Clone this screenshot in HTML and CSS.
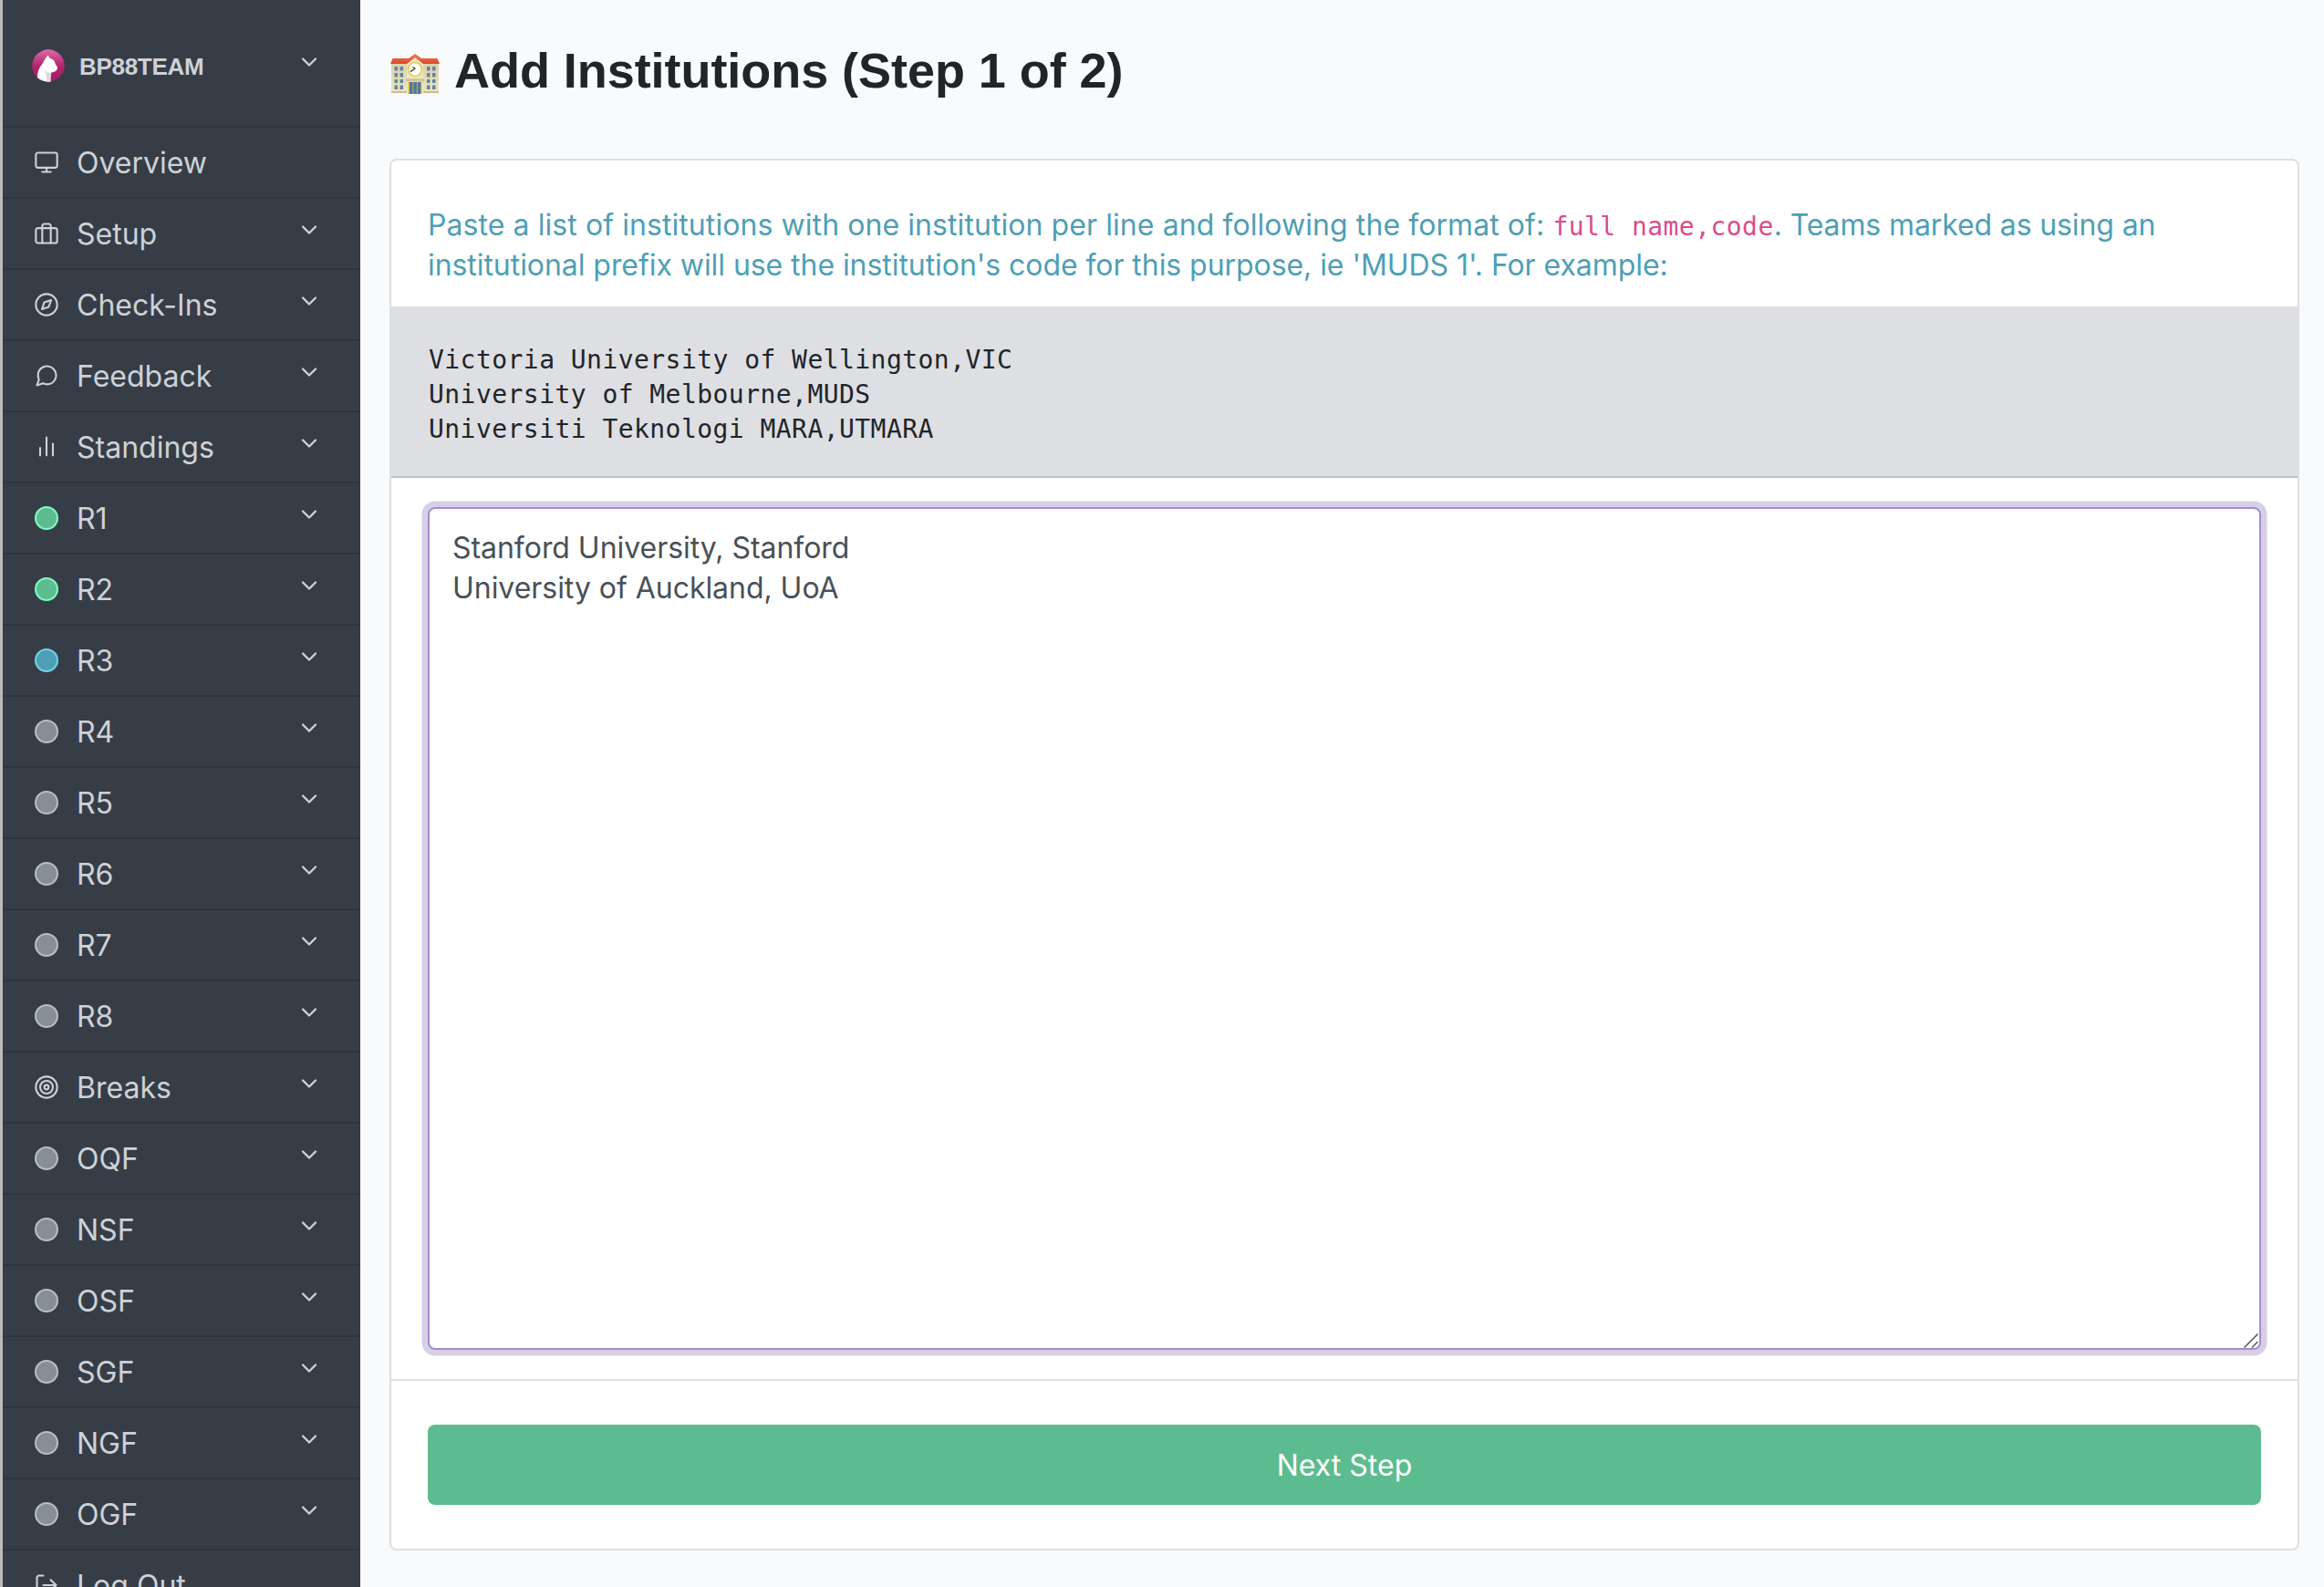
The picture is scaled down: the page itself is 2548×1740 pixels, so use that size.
FILE: index.html
```html
<!DOCTYPE html>
<html lang="en">
<head>
<meta charset="utf-8">
<title>Add Institutions</title>
<link rel="stylesheet" href="styles.css">
</head>
<body>
<svg class="defs" width="0" height="0">
  <symbol id="chevron" viewBox="0 0 24 24"><polyline points="6 9 12 15 18 9"/></symbol>
</svg>
<div class="app">
  <nav class="sidebar">
    <a class="brand">
      <svg class="logo" viewBox="0 0 36 36">
        <defs>
          <linearGradient id="pink" x1="0" y1="0" x2="0" y2="1"><stop offset="0" stop-color="#de6ba5"/><stop offset=".5" stop-color="#b4256f"/><stop offset="1" stop-color="#a01d68"/></linearGradient>
          <clipPath id="disc"><circle cx="18" cy="18" r="17.7"/></clipPath>
        </defs>
        <g clip-path="url(#disc)">
          <rect width="36" height="36" fill="url(#pink)"/>
          <path fill="#fff" d="M17.6 6.5c1 1 1.600 2.400 2.100 3.600 2.500.6 4.300 1.500 5.300 3.900.4 1.800 1 2.800 2.300 4.600.8 1.200.7 2.600.2 3.600-1 2.200-3.300 2.800-6 3.200-1 1.700-1 6.500-.8 10.600H6C5.500 30 6 23.500 10 18c3-3.500 3-6.500 7.600-11.500z"/>
          <path fill="#dcdadd" d="M14 23.500c2.500 2 4.600 2.400 7.300 2-1 2-1 6-.8 10.500h-4.200c-.1-4.500-.8-8.500-2.300-12.500z"/>
        </g>
      </svg>
      <span class="brand-name">BP88TEAM</span>
      <svg class="icon chevron"><use href="#chevron"/></svg>
    </a>
    <a class="item"><svg class="icon" viewBox="0 0 24 24"><rect x="2" y="3" width="20" height="14" rx="2"/><path d="M8 21h8M12 17v4"/></svg><span class="label">Overview</span></a>
    <a class="item"><svg class="icon" viewBox="0 0 24 24"><rect x="2" y="7" width="20" height="14" rx="2"/><path d="M16 21V5a2 2 0 0 0-2-2h-4a2 2 0 0 0-2 2v16"/></svg><span class="label">Setup</span><svg class="icon chevron"><use href="#chevron"/></svg></a>
    <a class="item"><svg class="icon" viewBox="0 0 24 24"><circle cx="12" cy="12" r="10"/><path d="M16.240 7.760l-2.120 6.360-6.360 2.120 2.120-6.360z"/></svg><span class="label">Check-Ins</span><svg class="icon chevron"><use href="#chevron"/></svg></a>
    <a class="item"><svg class="icon" viewBox="0 0 24 24"><path d="M21 11.500a8.380 8.380 0 0 1-.9 3.800 8.500 8.500 0 0 1-7.600 4.700 8.380 8.380 0 0 1-3.800-.9L3 21l1.900-5.700a8.380 8.380 0 0 1-.9-3.800 8.500 8.500 0 0 1 4.700-7.600 8.380 8.380 0 0 1 3.800-.9h.5a8.480 8.480 0 0 1 8 8v.5z"/></svg><span class="label">Feedback</span><svg class="icon chevron"><use href="#chevron"/></svg></a>
    <a class="item"><svg class="icon" viewBox="0 0 24 24"><path d="M18 20V9M12 20V3M6 20v-7"/></svg><span class="label">Standings</span><svg class="icon chevron"><use href="#chevron"/></svg></a>
    <a class="item"><i class="dot done"></i><span class="label">R1</span><svg class="icon chevron"><use href="#chevron"/></svg></a>
    <a class="item"><i class="dot done"></i><span class="label">R2</span><svg class="icon chevron"><use href="#chevron"/></svg></a>
    <a class="item"><i class="dot current"></i><span class="label">R3</span><svg class="icon chevron"><use href="#chevron"/></svg></a>
    <a class="item"><i class="dot"></i><span class="label">R4</span><svg class="icon chevron"><use href="#chevron"/></svg></a>
    <a class="item"><i class="dot"></i><span class="label">R5</span><svg class="icon chevron"><use href="#chevron"/></svg></a>
    <a class="item"><i class="dot"></i><span class="label">R6</span><svg class="icon chevron"><use href="#chevron"/></svg></a>
    <a class="item"><i class="dot"></i><span class="label">R7</span><svg class="icon chevron"><use href="#chevron"/></svg></a>
    <a class="item"><i class="dot"></i><span class="label">R8</span><svg class="icon chevron"><use href="#chevron"/></svg></a>
    <a class="item"><svg class="icon" viewBox="0 0 24 24"><circle cx="12" cy="12" r="10"/><circle cx="12" cy="12" r="6"/><circle cx="12" cy="12" r="2"/></svg><span class="label">Breaks</span><svg class="icon chevron"><use href="#chevron"/></svg></a>
    <a class="item"><i class="dot"></i><span class="label">OQF</span><svg class="icon chevron"><use href="#chevron"/></svg></a>
    <a class="item"><i class="dot"></i><span class="label">NSF</span><svg class="icon chevron"><use href="#chevron"/></svg></a>
    <a class="item"><i class="dot"></i><span class="label">OSF</span><svg class="icon chevron"><use href="#chevron"/></svg></a>
    <a class="item"><i class="dot"></i><span class="label">SGF</span><svg class="icon chevron"><use href="#chevron"/></svg></a>
    <a class="item"><i class="dot"></i><span class="label">NGF</span><svg class="icon chevron"><use href="#chevron"/></svg></a>
    <a class="item"><i class="dot"></i><span class="label">OGF</span><svg class="icon chevron"><use href="#chevron"/></svg></a>
    <a class="item"><svg class="icon" viewBox="0 0 24 24"><path d="M9 21H5a2 2 0 0 1-2-2V5a2 2 0 0 1 2-2h4M16 17l5-5-5-5M21 12H9"/></svg><span class="label">Log Out</span></a>
  </nav>
  <main class="main">
    <h1 class="title">
      <svg class="school" viewBox="0 0 54 44">
        <defs>
          <linearGradient id="wall" x1="0" y1="0" x2="0" y2="1"><stop offset="0" stop-color="#d9d0ae"/><stop offset="1" stop-color="#efe5bf"/></linearGradient>
          <linearGradient id="roof" x1="0" y1="0" x2="0" y2="1"><stop offset="0" stop-color="#f47a50"/><stop offset="1" stop-color="#d9492a"/></linearGradient>
        </defs>
        <rect x="1" y="10" width="52" height="32.500" fill="url(#wall)"/>
        <path fill="#c9bd97" d="M1 41h52v2H1z"/>
        <path fill="#f0e7c6" d="M18 43V10l9-8 9 8v33z"/>
        <path fill="url(#roof)" d="M2.500 5H20l7-5 7 5h17.500L54 11H36l-9-7-9 7H0z"/>
        <g fill="#5d86a3">
          <path d="M4.500 14h3.500v4.500H4.500zM10.500 14H14v4.500h-3.500zM4.500 21h3.500v4.500H4.500zM10.500 21H14v4.500h-3.500zM4.500 28h3.500v4H4.500zM10.500 28H14v4h-3.500zM4.500 34.500h3.500V39H4.500zM10.500 34.500H14V39h-3.500z"/>
          <path d="M40 14h3.500v4.500H40zM46 14h3.500v4.500H46zM40 21h3.500v4.500H40zM46 21h3.500v4.500H46zM40 28h3.500v4H40zM46 28h3.500v4H46zM40 34.500h3.500V39H40zM46 34.500h3.500V39H46z"/>
        </g>
        <path fill="#d0c69f" d="M17 27h20v3.500H17z"/>
        <path fill="#e0bd45" d="M19.500 31h15v13h-15z"/>
        <path fill="#4f7a9b" d="M21 31h3.500v13H21zM25.300 31h3.600v13h-3.600zM29.800 31h3.500v13h-3.500z"/>
        <circle cx="27" cy="17" r="7.500" fill="#fff" stroke="#e3c93f" stroke-width="1.600"/>
        <path d="M21.800 19.600l5.600-3.600M27.500 16l-3.300-1.500" fill="none" stroke="#444" stroke-width="1.300"/>
      </svg>
      <span class="title-text">Add Institutions (Step 1 of 2)</span>
    </h1>
    <form class="card">
      <p class="help"><span class="help-lead">Paste a list of institutions with one institution per line and following the format of: </span><code class="code">full name,code</code><span class="help-tail">. Teams marked as using an</span><br>institutional prefix will use the institution's code for this purpose, ie 'MUDS 1'. For example:</p>
      <pre class="example">Victoria University of Wellington,VIC
University of Melbourne,MUDS
Universiti Teknologi MARA,UTMARA</pre>
      <div class="field">
        <textarea class="input" spellcheck="false">Stanford University, Stanford
University of Auckland, UoA</textarea>
        <svg class="grip" viewBox="0 0 16 16"><path d="M.5 15.500l15-15M9 15.500L15.500 9"/></svg>
      </div>
      <div class="footer"><button class="submit" type="button">Next Step</button></div>
    </form>
  </main>
</div>
</body>
</html>
```
FILE: styles.css
```css
* { box-sizing: border-box; }
body { margin: 0; background: #f9fafc; font-family: Inter, sans-serif; font-size: 32px; }
.defs { display: block; }
.app { display: flex; height: 1740px; overflow: hidden; }

.sidebar { width: 395px; flex: none; background: #373d47; border-left: 3px solid #bbb; color: #cdd2d7; overflow: hidden; }
.brand, .item { display: flex; align-items: center; border-bottom: 2px solid #2f353f; padding: 0 42px 0 34px; }
.brand { height: 140px; padding-left: 32px; padding-top: 6px; }
.item { height: 78px; }
.logo { width: 36px; height: 36px; margin-right: 16px; }
.brand-name { padding-top: 2px; font: bold 26px "Liberation Sans", Arial, sans-serif; letter-spacing: -0.3px; flex: 1; }
.label { flex: 1; margin-left: 19px; padding-top: 2px; font-weight: 400; line-height: 44px; letter-spacing: 0; }
.icon { width: 28px; height: 28px; flex: none; fill: none; stroke: #cdd2d7; stroke-width: 1.800; stroke-linecap: round; stroke-linejoin: round; }
.chevron { transform: translateY(-4px); stroke-width: 2; }
.dot { width: 26px; height: 26px; margin: 0 1px; border-radius: 50%; background: #868e96; border: 2px solid #b9bec4; }
.done { background: #5dbc8f; border-color: #7dffc4; }
.current { background: #4e9fb5; border-color: #71d2ea; }

.main { flex: 1; padding: 0 27px 0 32px; }
.title { display: flex; align-items: center; height: 174px; margin: 0; padding-bottom: 16px; font: bold 54px "Liberation Sans", Arial, sans-serif; letter-spacing: -0.050px; color: #212529; }
.title-text { padding-bottom: 5px; }
.school { width: 54px; height: 44px; margin: 4px 16px 0 1px; }

.card { height: 1526px; border: 2px solid #dedfe1; border-radius: 8px; background: #fff; overflow: hidden; }
.help { height: 160px; margin: 0; padding: 49px 40px 0; line-height: 44px; letter-spacing: -0.060px; color: #4e9fb5; white-space: nowrap; }
.help-lead { letter-spacing: 0.075px; }
.help-tail { letter-spacing: -0.120px; }
.code, .example { font-family: "DejaVu Sans Mono", monospace; font-size: 28px; letter-spacing: 0.450px; }
.code { color: #d94d8c; line-height: 1; }
.example { height: 188px; margin: 0; padding: 40px 40px 0 41px; line-height: 38px; background: #dedfe3; border-bottom: 2px solid #bfc0c5; color: #212529; }
.field { position: relative; height: 990px; padding: 32px 40px; border-bottom: 2px solid #dedfe1; }
.input { display: block; width: 100%; height: 924px; padding: 21px 25px; border: 2px solid #a38ccf; border-radius: 8px; outline: 0; box-shadow: 0 0 0 6.500px #d7cfe6; resize: none; font: 32px/44px Inter, sans-serif; letter-spacing: -0.040px; color: #495057; }
.grip { position: absolute; right: 43px; bottom: 34px; width: 16px; height: 16px; fill: none; stroke: #555; stroke-width: 1.500; }
.footer { padding: 48px 40px; }
.submit { display: block; width: 100%; height: 88px; padding: 2px 0 0; border: 0; border-radius: 8px; background: #5dbc8f; color: #fff; font: 32px/44px Inter, sans-serif; }
```
